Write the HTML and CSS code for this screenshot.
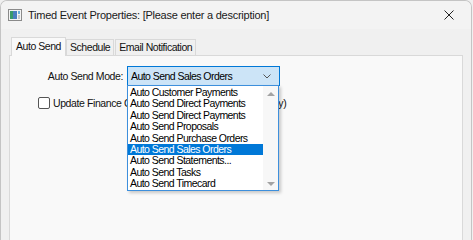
FILE: index.html
```html
<!DOCTYPE html>
<html lang="en">
<head>
  <meta charset="UTF-8">
  <title>Timed Event Properties</title>
  <link rel="stylesheet" href="styles.css">
</head>
<body>
  <div class="window">
    <div class="titlebar">
      <svg class="app-icon" width="14" height="12" viewBox="0 0 14 12">
        <rect x="0.5" y="0.5" width="13" height="11" fill="#f4f4f4" stroke="#8a8a8a"/>
        <rect x="2" y="2" width="3" height="8" fill="#3a9a6a"/>
        <rect x="5" y="2" width="4" height="8" fill="#4a7fc0"/>
        <rect x="10" y="2" width="2" height="3" fill="#6ab0d8"/>
        <rect x="10" y="6" width="2" height="4" fill="#c8c8c8"/>
      </svg>
      <span class="title">Timed Event Properties: [Please enter a description]</span>
      <svg class="close" width="10" height="10" viewBox="0 0 10 10">
        <path d="M0.5 0.5 L9.5 9.5 M9.5 0.5 L0.5 9.5" stroke="#222" stroke-width="1"/>
      </svg>
    </div>

    <div class="content">
      <div class="tabs">
        <div class="tab active">Auto Send</div>
        <div class="tab">Schedule</div>
        <div class="tab">Email Notification</div>
      </div>
      <div class="panel">
        <div class="field-row">
          <label class="field-label">Auto Send Mode:</label>
          <div class="combo-wrap">
            <div class="combo">
              <span>Auto Send Sales Orders</span>
              <svg class="chevron" width="8" height="5" viewBox="0 0 8 5">
                <path d="M0.5 0.5 L4 4 L7.5 0.5" fill="none" stroke="#555" stroke-width="1"/>
              </svg>
            </div>
            <div class="dropdown">
              <ul class="options">
                <li>Auto Customer Payments</li>
                <li>Auto Send Direct Payments</li>
                <li>Auto Send Direct Payments</li>
                <li>Auto Send Proposals</li>
                <li>Auto Send Purchase Orders</li>
                <li class="selected">Auto Send Sales Orders</li>
                <li>Auto Send Statements...</li>
                <li>Auto Send Tasks</li>
                <li>Auto Send Timecard</li>
              </ul>
              <div class="scrollbar">
                <span class="arrow up"></span>
                <span class="arrow down"></span>
              </div>
            </div>
          </div>
        </div>
        <div class="check-row">
          <span class="checkbox"></span>
          <span class="check-label">Update Finance Charge Before Sending (Orders Only)</span>
        </div>
      </div>
    </div>
  </div>
</body>
</html>
```

FILE: styles.css
```css
body {
  margin: 0;
  background: #f0f0f0;
  font-family: "Liberation Sans", Arial, sans-serif;
  color: #000;
  overflow: hidden;
}
.window {
  width: 470px;
  height: 239px;
  background: #f0f0f0;
  border: 1px solid #c4c4c4;
  border-bottom: none;
  border-radius: 7px 7px 0 0;
  overflow: hidden;
}
.titlebar {
  height: 28px;
  background: #f3f3f3;
  display: flex;
  align-items: center;
}
.app-icon {
  margin-left: 7px;
}
.title {
  margin-left: 6px;
  font-size: 11px;
  letter-spacing: -0.25px;
  color: #1a1a1a;
}
.close {
  margin-left: auto;
  margin-right: 17px;
}
.content {
  padding: 7px 0 0 8px;
}
.tabs {
  display: flex;
  align-items: flex-end;
  height: 19px;
  padding-left: 2px;
  position: relative;
  z-index: 1;
}
.tab {
  height: 15px;
  line-height: 15px;
  padding: 0 3px;
  font-size: 10.5px;
  letter-spacing: -0.45px;
  background: #f0f0f0;
  border: 1px solid #d9d9d9;
  border-bottom: none;
  margin-right: 1px;
  color: #111;
}
.tab.active {
  height: 18px;
  line-height: 16px;
  padding: 0 4px;
  background: #f9f9f9;
  margin-right: 0;
  margin-bottom: -1px;
}
.panel {
  width: 452px;
  height: 190px;
  background: #f9f9f9;
  border: 1px solid #d9d9d9;
  position: relative;
}
.field-row {
  display: flex;
  align-items: center;
  margin-top: 10px;
}
.field-label {
  width: 113px;
  text-align: right;
  font-size: 10.5px;
  letter-spacing: -0.4px;
  color: #111;
}
.combo-wrap {
  position: relative;
  margin-left: 4px;
}
.combo {
  width: 148px;
  height: 18px;
  border: 1px solid #0078d7;
  background: #cce4f7;
  display: flex;
  align-items: center;
  padding-left: 3px;
  box-sizing: content-box;
  font-size: 10.5px;
  letter-spacing: -0.55px;
}
.chevron {
  margin-left: auto;
  margin-right: 8px;
}
.dropdown {
  position: absolute;
  top: 19px;
  left: 0;
  width: 150px;
  height: 104px;
  background: #fff;
  border: 1px solid #3d8fdc;
  display: flex;
  box-shadow: 2px 2px 3px rgba(0, 0, 0, 0.2);
  z-index: 2;
}
.options {
  list-style: none;
  margin: 0;
  padding: 1px 0 0 0;
  flex: 1;
}
.options li {
  height: 11.4px;
  line-height: 11.4px;
  padding-left: 2px;
  font-size: 10.5px;
  letter-spacing: -0.55px;
  white-space: nowrap;
}
.options li.selected {
  background: #0078d7;
  color: #fff;
}
.scrollbar {
  width: 15px;
  background: #f7f7f7;
  position: relative;
}
.arrow {
  position: absolute;
  left: 4px;
  width: 0;
  height: 0;
  border-left: 4px solid transparent;
  border-right: 4px solid transparent;
}
.arrow.up {
  top: 6px;
  border-bottom: 4px solid #a3a3a3;
}
.arrow.down {
  bottom: 4px;
  border-top: 4px solid #a3a3a3;
}
.check-row {
  display: flex;
  align-items: center;
  margin-top: 11px;
  padding-left: 28px;
}
.checkbox {
  width: 10px;
  height: 10px;
  border: 1px solid #555;
  border-radius: 2px;
  background: #fff;
}
.check-label {
  margin-left: 3px;
  font-size: 10.5px;
  letter-spacing: -0.4px;
  color: #111;
  white-space: nowrap;
}
```
